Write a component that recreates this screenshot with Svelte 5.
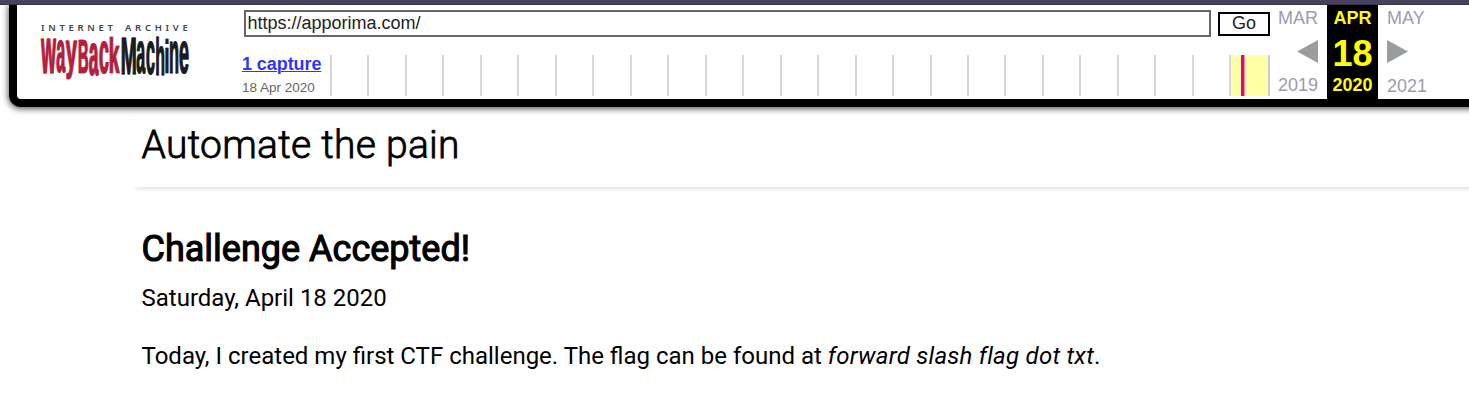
<script>
  const red = '#b3203f';
  const ink = '#1c1c1e';
  // character, left, right, top, baseline, then bold left bearing, ink width and ink height per em
  const letters = [
    ['w', 41.2, 55.8, 39.6, 73.4, 0.003, 0.772, 0.528, red],
    ['a', 56.8, 65, 40.6, 72.4, 0.035, 0.51, 0.54, red],
    ['y', 66, 76.8, 40.6, 68.4, 0.01, 0.535, 0.528, red],
    ['B', 79, 88, 40.4, 73, 0.07, 0.61, 0.688, red],
    ['a', 89.4, 98.2, 42.6, 74.6, 0.035, 0.51, 0.54, red],
    ['c', 99.6, 108.2, 40.6, 73, 0.04, 0.48, 0.54, red],
    ['k', 110, 119.4, 37, 73.2, 0.067, 0.49, 0.725, red],
    ['M', 122, 135.4, 37.8, 73.8, 0.07, 0.693, 0.688, ink],
    ['a', 136.8, 145, 40.6, 73, 0.035, 0.51, 0.54, ink],
    ['c', 146.6, 154.4, 40.6, 73.8, 0.04, 0.48, 0.54, ink],
    ['h', 156.4, 164, 37.6, 75.4, 0.067, 0.48, 0.725, ink],
    ['i', 165.8, 168.2, 39.4, 73, 0.07, 0.137, 0.725, ink],
    ['n', 170.2, 178, 40.6, 73, 0.067, 0.48, 0.54, ink],
    ['e', 179.6, 188.4, 40.2, 72.6, 0.035, 0.485, 0.54, ink]
  ].map(([ch, x1, x2, top, base, lsb, w, h, color]) => {
    const sx = (x2 - x1) / (w * 20);
    const sy = (base - top) / (h * 20);
    return { ch, color, t: `translate(${x1 - 41 - lsb * 20 * sx} ${base - 36}) scale(${sx} ${sy})` };
  });
  const years = Array.from({ length: 25 }, (_, i) => i);
</script>

<div class="chrome"></div>
<header class="toolbar">
  <div class="logo">
    <div class="archive"><span>INTERNET</span><span>ARCHIVE</span></div>
    <svg class="wordmark" width="150" height="42" viewBox="0 0 150 42">
      {#each letters as l}
        <text class:red={l.color === red} transform={l.t} font-size="20" fill={l.color} stroke={l.color}>{l.ch}</text>
      {/each}
    </svg>
  </div>
  <div class="main">
    <div class="urlrow">
      <div class="url">https://apporima.com/</div>
      <div class="go">Go</div>
    </div>
    <div class="capturerow">
      <div class="captures">
        <a href="#captures">1 capture</a>
        <span>18 Apr 2020</span>
      </div>
      <div class="spark">
        {#each years as y}
          <div class="year" class:current={y === 24}>{#if y === 24}<i></i>{/if}</div>
        {/each}
      </div>
    </div>
  </div>
  <div class="col prev">
    <span>MAR</span>
    <svg width="21" height="23" viewBox="0 0 21 23"><path d="M21 0V23L0 11.5Z" fill="#999da0" /></svg>
    <span>2019</span>
  </div>
  <div class="col now"><span>APR</span><b>18</b><span>2020</span></div>
  <div class="col next">
    <span>MAY</span>
    <svg width="21" height="23" viewBox="0 0 21 23"><path d="M0 0V23L21 11.5Z" fill="#999da0" /></svg>
    <span>2021</span>
  </div>
</header>
<main>
  <div class="site"><h1>Automate the pain</h1></div>
  <h2>Challenge Accepted!</h2>
  <p class="date">Saturday, April 18 2020</p>
  <p class="body">Today, I created my first CTF challenge. The flag can be found at <em>forward slash flag dot txt</em>.</p>
</main>

<style>
  :global(body) { background: #fff; overflow: hidden; }
  .chrome { height: 4px; background: #47425c; border-bottom: 1px solid #37334a; }
  .toolbar {
    position: relative; box-sizing: border-box; width: 1480px; height: 102px; margin-left: 9px;
    border: 8px solid #000; border-top: 0; border-radius: 0 0 12px 12px; background: #fff;
    box-shadow: 0 1px 6px 1px rgba(0, 0, 0, .65); clip-path: inset(0 0 -20px -20px);
    display: flex; font-family: "Liberation Sans", Arial, sans-serif;
  }
  .logo { width: 150px; padding: 16px 0 0 24px; flex: none; }
  .archive {
    display: flex; justify-content: space-between; height: 15px; line-height: 14px;
    font-family: "Noto Sans", sans-serif; font-size: 9.5px; font-weight: 600; letter-spacing: 3.7px; color: #444;
    white-space: nowrap;
  }
  .archive span { width: 77px; }
  .archive span:last-child { width: 66px; }
  .wordmark { display: block; overflow: visible; }
  .wordmark text { font-weight: 700; stroke-width: .3px; text-shadow: .9px 0 0 rgba(28, 28, 30, .42), -.9px 0 0 rgba(28, 28, 30, .42); }
  .wordmark .red { text-shadow: .9px 0 0 rgba(190, 40, 60, .5), -.9px 0 0 rgba(190, 40, 60, .5); }
  .main { width: 1028px; margin-left: 51px; padding-top: 5px; flex: none; }
  .urlrow { display: flex; padding-left: 2px; gap: 7px; height: 45px; }
  .url {
    box-sizing: border-box; width: 967px; height: 27px; border: 2px solid #666;
    padding-left: 1.5px; font-size: 18px; line-height: 22px; color: #222;
  }
  .go {
    box-sizing: border-box; width: 52px; height: 24px; margin-top: 2px; border: 2px solid #000;
    font-size: 18px; line-height: 19px; text-align: center; color: #222;
  }
  .capturerow { display: flex; }
  .captures { width: 88px; display: flex; flex-direction: column; white-space: nowrap; }
  .captures a { font-size: 18px; font-weight: 700; line-height: 18px; color: #33f; text-decoration-thickness: 1px; letter-spacing: -.08px; }
  .captures span { font-size: 13.5px; line-height: 16px; margin-top: 7px; color: #666; }
  .spark { display: flex; width: 940px; height: 41px; box-sizing: border-box; border-right: 2px solid #ccc; }
  .year { width: 37.48px; flex: none; box-sizing: border-box; border-left: 2px solid #d8d8d8; }
  .current { flex: 1; background: #ffffa5; padding-left: 10px; }
  .current i { display: block; width: 3px; height: 100%; background: #ec008c; border-right: 1px solid #ff8a98; }
  .col { box-sizing: border-box; height: 94px; display: flex; flex-direction: column; color: #9e9aae; font-size: 18px; line-height: 20px; flex: none; }
  .prev { width: 57px; align-items: flex-end; padding: 3px 9px 0 0; }
  .prev svg { margin: 12px 0; }
  .now { width: 51px; background: #000; color: #ff0; align-items: center; font-weight: 700; padding-top: 3px; }
  .now b { font-size: 36px; line-height: 40px; margin: 6px 0 1px; }
  .next { width: 60px; align-items: flex-start; padding: 3px 0 0 9px; }
  .next svg { margin: 12px 0 13px; }
  main { font-family: Roboto, sans-serif; color: #000; padding-left: 132px; }
  .site {
    box-sizing: border-box; height: 80px; width: 1400px; padding: 13px 0 0 9.5px;
    box-shadow: 0 5px 6px -5px rgba(0, 0, 0, .22);
  }
  h1 { margin: 0; font-size: 39px; line-height: 50px; font-weight: 300; letter-spacing: .27px; -webkit-text-stroke: .8px #000; }
  h2 { margin: 38px 0 0 9.5px; font-size: 36px; line-height: 48px; font-weight: 400; -webkit-text-stroke: 1.1px #000; }
  p { margin: 0 0 0 9.5px; font-size: 24px; line-height: 32px; white-space: nowrap; }
  em { letter-spacing: .26px; }
  .date { margin-top: 9px; }
  .body { margin-top: 26px; }
</style>
